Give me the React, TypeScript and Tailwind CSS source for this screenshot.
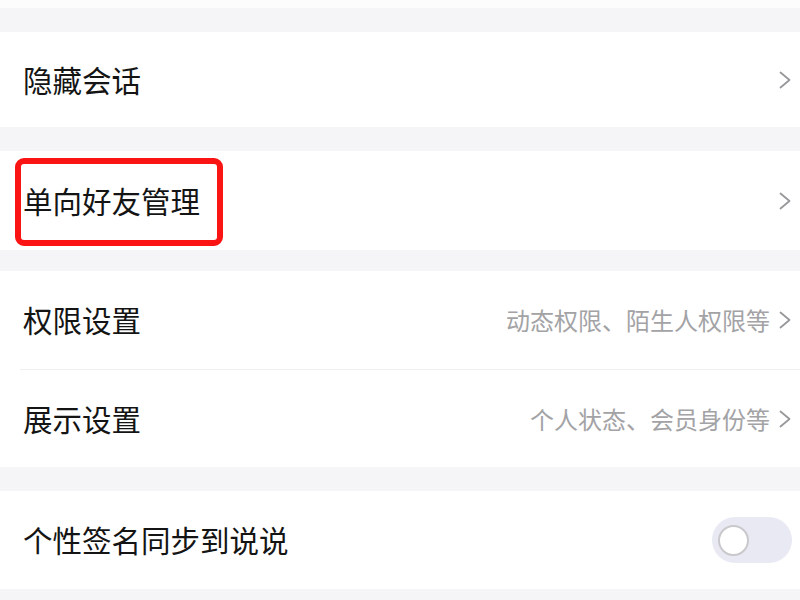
const font = { fontFamily: '"Noto Sans CJK SC", "Noto Sans", sans-serif' };

function Chevron() {
  return (
    <svg width="14" height="20" viewBox="0 0 14 20" fill="none" className="shrink-0">
      <polyline points="2.5,2.5 11.5,10 2.5,17.5" stroke="#98989c" strokeWidth="1.8" strokeLinecap="round" strokeLinejoin="round" />
    </svg>
  );
}

function Row({ title, sub, h }: { title: string; sub?: string; h: string }) {
  return (
    <div className={`flex items-center justify-between pl-[23px] pr-[8px] ${h}`}>
      <span className="text-[29.5px] text-[#141414] leading-none">{title}</span>
      <div className="flex items-center gap-[8px]">
        {sub && <span className="text-[24px] text-[#a3a3a6] leading-none">{sub}</span>}
        <Chevron />
      </div>
    </div>
  );
}

export default function App() {
  return (
    <div className="w-[800px] h-[600px] overflow-hidden bg-[#f5f5f7]" style={font}>
      <div className="h-[8px] bg-[#fcfcfd]" />
      <div className="h-[24px]" />

      <div className="bg-white">
        <Row title="隐藏会话" h="h-[95px]" />
      </div>
      <div className="h-[24px]" />

      <div className="bg-white relative">
        <Row title="单向好友管理" h="h-[99px]" />
        <div className="absolute left-[15px] top-[7px] w-[208px] h-[88px] border-[6px] border-[#fa1414] rounded-[9px]" />
      </div>
      <div className="h-[21px]" />

      <div className="bg-white">
        <Row title="权限设置" sub="动态权限、陌生人权限等" h="h-[98px]" />
        <div className="ml-[20px] h-px bg-[#efeff1]" />
        <Row title="展示设置" sub="个人状态、会员身份等" h="h-[97px]" />
      </div>
      <div className="h-[24px]" />

      <div className="bg-white flex items-center justify-between pl-[23px] pr-[8px] h-[98px]">
        <span className="text-[29.5px] text-[#141414] leading-none">个性签名同步到说说</span>
        <div className="w-[80px] h-[46px] rounded-full bg-[#e9e9f3] flex items-center pl-[6px]">
          <div className="w-[31px] h-[31px] rounded-full bg-white border-2 border-[#c9c9cd]" />
        </div>
      </div>
    </div>
  );
}
